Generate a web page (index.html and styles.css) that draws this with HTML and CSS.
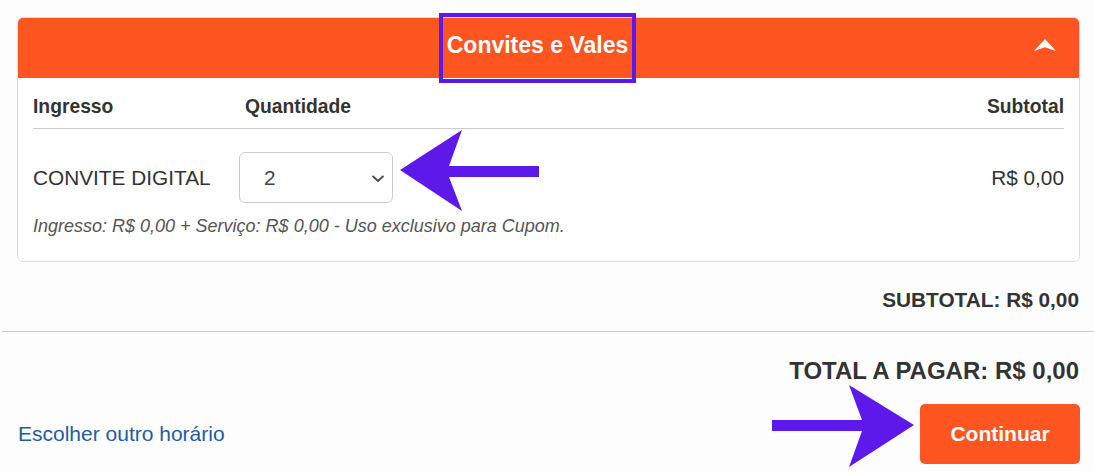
FILE: index.html
```html
<!DOCTYPE html>
<html lang="pt-BR">
<head>
<meta charset="utf-8">
<title>Convites e Vales</title>
<link rel="stylesheet" href="styles.css">
</head>
<body>
<div class="page">
  <section class="panel">
    <header class="panel-head">
      <h2 class="panel-title">Convites e Vales</h2>
      <svg class="collapse-icon" width="22" height="13" viewBox="0 0 22 13" aria-hidden="true">
        <polygon points="0,12 11,0 22,12 11,8.3" fill="#fff"/>
      </svg>
    </header>
    <div class="panel-body">
      <div class="cols">
        <span class="col-ticket">Ingresso</span>
        <span class="col-qty">Quantidade</span>
        <span class="col-sub">Subtotal</span>
      </div>
      <div class="row">
        <span class="ticket-name">CONVITE DIGITAL</span>
        <div class="qty-select">
          <span class="qty-value">2</span>
          <svg class="select-caret" width="14" height="9" viewBox="0 0 14 9" aria-hidden="true">
            <polyline points="1.5,1.8 7,7 12.5,1.8" fill="none" stroke="#444" stroke-width="1.8"/>
          </svg>
        </div>
        <span class="row-sub">R$ 0,00</span>
      </div>
      <p class="note">Ingresso: R$ 0,00 + Serviço: R$ 0,00 - Uso exclusivo para Cupom.</p>
    </div>
  </section>
  <div class="subtotal">SUBTOTAL: R$ 0,00</div>
</div>
<hr class="divider">
<div class="page">
  <div class="total">TOTAL A PAGAR: R$ 0,00</div>
  <div class="actions">
    <a class="other-time" href="#">Escolher outro horário</a>
    <button class="continue" type="button">Continuar</button>
  </div>
</div>

<div class="highlight-box"></div>
<svg class="annotations" width="1094" height="471" viewBox="0 0 1094 471" aria-hidden="true">
  <polygon points="400,170 462,130 449,166 539,166 539,177 449,177 462,211" fill="#5d19ea"/>
  <polygon points="914,425 849,385 862,420 772,420 772,431 862,431 849,467" fill="#5d19ea"/>
</svg>
</body>
</html>
```

FILE: styles.css
```css
* { box-sizing: border-box; }

html, body {
  margin: 0;
  padding: 0;
  background: #fdfdfd;
  font-family: "Liberation Sans", Arial, sans-serif;
  color: #333;
}

body {
  position: relative;
  width: 1094px;
  height: 471px;
  overflow: hidden;
}

.page {
  padding: 0 14px 0 17px;
}

.panel {
  margin-top: 17px;
  background: #fff;
  border: 1px solid #dddddd;
  border-radius: 6px;
  overflow: hidden;
}

.panel-head {
  position: relative;
  height: 60px;
  background: #ff5520;
  display: flex;
  align-items: center;
  justify-content: center;
  padding-right: 22px;
  padding-bottom: 6px;
}

.panel-title {
  margin: 0;
  color: #fff;
  font-size: 23px;
  font-weight: bold;
  line-height: 1;
}

.collapse-icon {
  position: absolute;
  right: 23px;
  top: 21px;
}

.panel-body {
  padding: 0 15px 24px 15px;
}

.cols {
  display: grid;
  grid-template-columns: 206px 1fr auto;
  align-items: center;
  height: 51px;
  padding-top: 8px;
  border-bottom: 1px solid #cccccc;
  font-size: 19.3px;
  font-weight: bold;
  color: #333;
}

.col-qty { padding-left: 6px; }
.col-sub { text-align: right; }

.row {
  display: grid;
  grid-template-columns: 206px 1fr auto;
  align-items: center;
  margin-top: 23px;
  font-size: 20.8px;
  color: #333;
}

.qty-select {
  width: 154px;
  height: 51px;
  border: 1px solid #cccccc;
  border-radius: 6px;
  background: #fff;
  display: flex;
  align-items: center;
  justify-content: space-between;
  padding: 0 7px 0 24px;
}

.qty-value {
  font-size: 20.8px;
  color: #444;
}

.select-caret { margin-top: 1px; }

.row-sub { text-align: right; }

.note {
  margin: 13px 0 0;
  font-size: 18px;
  font-style: italic;
  color: #555;
}

.subtotal {
  text-align: right;
  font-size: 20.8px;
  font-weight: bold;
  color: #333;
  margin-top: 26px;
  line-height: 24px;
  padding-right: 1px;
}

.divider {
  margin: 19px 0 0 2px;
  border: 0;
  border-top: 1px solid #cccccc;
  height: 0;
}

.total {
  text-align: right;
  font-size: 24px;
  font-weight: bold;
  color: #333;
  margin-top: 26px;
  line-height: 26px;
  padding-right: 1px;
}

.actions {
  display: flex;
  align-items: center;
  justify-content: space-between;
  margin-top: 20px;
  padding-left: 1px;
}

.other-time {
  color: #1b5ea6;
  text-decoration: none;
  font-size: 21px;
}

.continue {
  width: 160px;
  height: 60px;
  border: 0;
  border-radius: 5px;
  background: #ff5520;
  color: #fff;
  font-family: "Liberation Sans", Arial, sans-serif;
  font-size: 21px;
  font-weight: bold;
  cursor: pointer;
}

.highlight-box {
  position: absolute;
  left: 439px;
  top: 13px;
  width: 197px;
  height: 70px;
  border: 4px solid #5d19ea;
}

.annotations {
  position: absolute;
  left: 0;
  top: 0;
  pointer-events: none;
}
```
